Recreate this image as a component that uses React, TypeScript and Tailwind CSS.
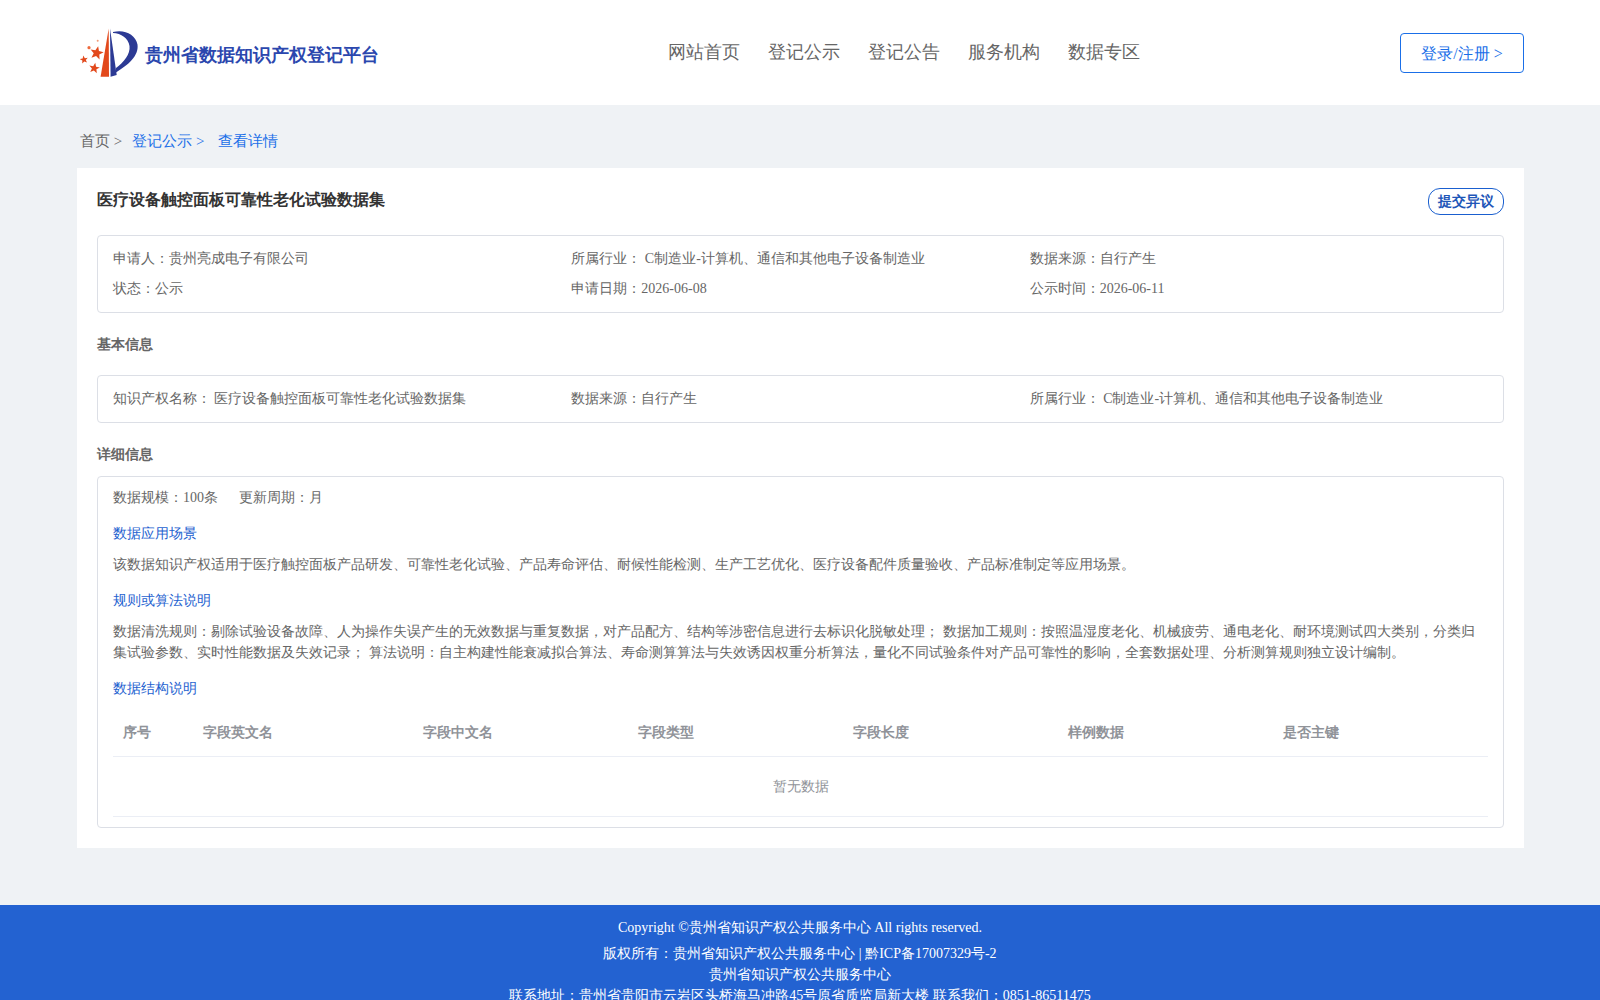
import React from "react";

const Star = ({ x, y, r, rot }: { x: number; y: number; r: number; rot: number }) => (
  <polygon
    points="0,-1 0.26,-0.33 0.95,-0.31 0.41,0.13 0.59,0.81 0,0.42 -0.59,0.81 -0.41,0.13 -0.95,-0.31 -0.26,-0.33"
    transform={`translate(${x} ${y}) rotate(${rot}) scale(${r})`}
    fill="#e2491c"
  />
);

const Logo = () => (
  <svg width="60" height="52" viewBox="0 0 60 52" className="shrink-0">
    <path d="M28.7 1.5 L20.6 49.7 L29 49.7 Z" fill="#e2491c" />
    <path d="M30 1.5 L30.6 49.7 L36.7 48 Z" fill="#2c3a94" />
    <path d="M33 5 C44 2 55.5 7 57.5 17.5 C59 29 48 38 36 45.5 L36 41 C44 35 50.5 27 49.5 19 C48.5 11 41 6.5 33 6 Z" fill="#2c3a94" />
    <Star x={16.7} y={26} r={7} rot={12} />
    <Star x={4} y={32.7} r={4.2} rot={-10} />
    <Star x={14.3} y={41.2} r={5.6} rot={10} />
    <circle cx="9" cy="20.7" r="1.6" fill="#ee6a3c" />
    <circle cx="17.7" cy="13.7" r="1" fill="#f09a78" />
  </svg>
);

const Info = ({ children }: { children: React.ReactNode }) => <div className="h-[30px] leading-[30px]">{children}</div>;

const columns = [
  { name: "序号", w: "w-[80px]" },
  { name: "字段英文名", w: "w-[220px]" },
  { name: "字段中文名", w: "w-[215px]" },
  { name: "字段类型", w: "w-[215px]" },
  { name: "字段长度", w: "w-[215px]" },
  { name: "样例数据", w: "w-[215px]" },
  { name: "是否主键", w: "flex-1" },
];

export default function App() {
  return (
    <div className="[font-family:'Liberation_Serif',serif] bg-[#eff2f5] text-[14px] text-[#666]">
      <header className="h-[105px] bg-white px-[80px] flex items-center relative">
        <div className="flex items-center w-[588px] pt-[1px]">
          <Logo />
          <span className="ml-[5px] text-[18px] font-bold text-[#2b47ae] mt-[4px]">贵州省数据知识产权登记平台</span>
        </div>
        <nav className="flex gap-[28px] text-[18px] text-[#666]">
          <a>网站首页</a>
          <a>登记公示</a>
          <a>登记公告</a>
          <a>服务机构</a>
          <a>数据专区</a>
        </nav>
        <button className="ml-auto mr-[-4px] w-[124px] h-[40px] pt-[2px] border border-[#1a6fe8] rounded-[4px] text-[16px] text-[#1a6fe8]">登录/注册 &gt;</button>
      </header>

      <div className="h-[63px] pl-[80px] pt-[10px] flex items-center text-[15px]">
        <span>首页 &gt;</span>
        <span className="ml-[10px] text-[#1a6fe8]">登记公示 &gt;</span>
        <span className="ml-[14px] text-[#1a6fe8]">查看详情</span>
      </div>

      <main className="mx-[77px] w-[1447px] h-[680px] bg-white px-[20px] pt-[20px]">
        <div className="flex justify-between h-[47px]">
          <h1 className="text-[16px] font-bold text-[#333] leading-[24px]">医疗设备触控面板可靠性老化试验数据集</h1>
          <button className="h-[27px] px-[9px] border border-[#1a5fcf] rounded-[12px] text-[14px] font-bold text-[#1e56b8]">提交异议</button>
        </div>

        <section className="h-[78px] border border-[#dcdfe6] rounded-[4px] px-[15px] py-[8px] grid grid-cols-3">
          <Info>申请人：贵州亮成电子有限公司</Info>
          <Info>所属行业： C制造业-计算机、通信和其他电子设备制造业</Info>
          <Info>数据来源：自行产生</Info>
          <Info>状态：公示</Info>
          <Info>申请日期：2026-06-08</Info>
          <Info>公示时间：2026-06-11</Info>
        </section>

        <h2 className="h-[62px] leading-[63px] font-bold text-[14px] text-[#666]">基本信息</h2>
        <section className="h-[48px] border border-[#dcdfe6] rounded-[4px] pb-[2px] px-[15px] grid grid-cols-3 items-center">
          <div>知识产权名称： <span className="ml-[-1px]">医疗设备触控面板可靠性老化试验数据集</span></div>
          <div>数据来源：自行产生</div>
          <div>所属行业： C制造业-计算机、通信和其他电子设备制造业</div>
        </section>

        <h2 className="h-[53px] leading-[63px] font-bold text-[14px] text-[#666]">详细信息</h2>
        <section className="h-[352px] border border-[#dcdfe6] rounded-[4px] px-[15px]">
          <div className="h-[42px] leading-[41px]">
            数据规模：100条<span className="ml-[21px]">更新周期：月</span>
          </div>
          <div className="h-[30px] leading-[30px] text-[#1e62d0]">数据应用场景</div>
          <p className="h-[37px] leading-[32px]">该数据知识产权适用于医疗触控面板产品研发、可靠性老化试验、产品寿命评估、耐候性能检测、生产工艺优化、医疗设备配件质量验收、产品标准制定等应用场景。</p>
          <div className="h-[30px] leading-[30px] text-[#1e62d0]">规则或算法说明</div>
          <p className="h-[58px] pt-[5px] leading-[21px]">数据清洗规则：剔除试验设备故障、人为操作失误产生的无效数据与重复数据，对产品配方、结构等涉密信息进行去标识化脱敏处理； 数据加工规则：按照温湿度老化、机械疲劳、通电老化、耐环境测试四大类别，分类归集试验参数、实时性能数据及失效记录； 算法说明：自主构建性能衰减拟合算法、寿命测算算法与失效诱因权重分析算法，量化不同试验条件对产品可靠性的影响，全套数据处理、分析测算规则独立设计编制。</p>
          <div className="h-[30px] leading-[30px] text-[#1e62d0]">数据结构说明</div>
          <div className="mt-[6px]">
            <div className="flex h-[47px] pb-[1px] items-center border-b border-[#ebeef5] font-bold text-[#909399]">
              {columns.map((c) => (
                <div key={c.name} className={`${c.w} px-[10px]`}>{c.name}</div>
              ))}
            </div>
            <div className="h-[60px] flex items-center justify-center border-b border-[#ebeef5] text-[#909399]">暂无数据</div>
          </div>
        </section>
      </main>

      <footer className="mt-[57px] bg-[#2362d1] text-white text-center text-[14px] pt-[12px] pb-[12px]">
        <div className="leading-[22px] mb-[4px]">Copyright ©贵州省知识产权公共服务中心 All rights reserved.</div>
        <div className="leading-[21px]">版权所有：贵州省知识产权公共服务中心 | 黔ICP备17007329号-2</div>
        <div className="leading-[21px]">贵州省知识产权公共服务中心</div>
        <div className="leading-[22px]">联系地址：贵州省贵阳市云岩区头桥海马冲路45号原省质监局新大楼 联系我们：0851-86511475</div>
      </footer>
    </div>
  );
}
